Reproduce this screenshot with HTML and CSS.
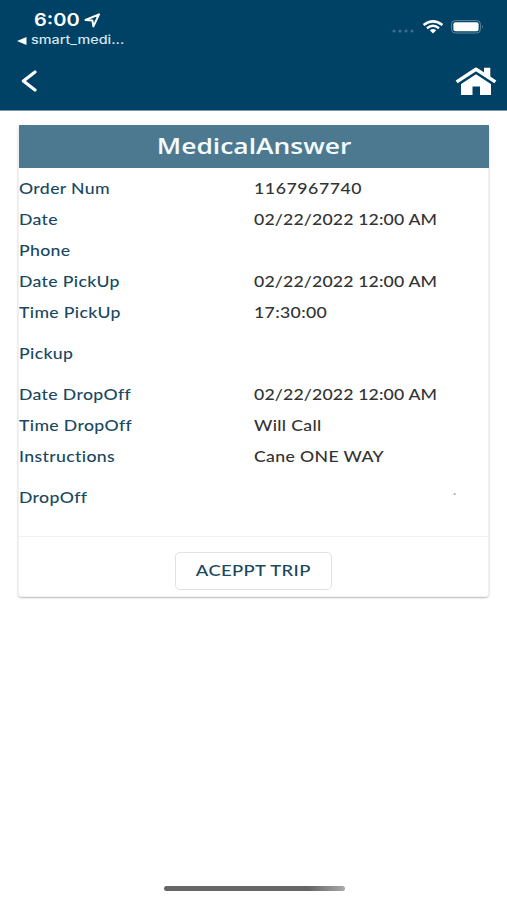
FILE: index.html
```html
<!DOCTYPE html>
<html lang="en">
<head>
<meta charset="utf-8">
<title>Trip</title>
<link rel="stylesheet" href="styles.css">
</head>
<body>
<header class="top">
  <div class="status">
    <div class="status-left">
      <div class="clock"><span>6:00</span>
        <svg width="17" height="15" viewBox="0 0 17 15"><path d="M1.5 7 15 1.4 9.4 13.4 8.4 7.4z" fill="none" stroke="#fff" stroke-width="2" stroke-linejoin="round"/></svg>
      </div>
      <div class="return"><svg width="10" height="8" viewBox="0 0 10 8"><path d="M0 4 9.5 0v8z" fill="#fff"/></svg><span>smart_medi...</span></div>
    </div>
    <div class="status-right">
      <svg class="signal" width="22" height="4" viewBox="0 0 22 4"><g fill="#3d6d8a"><circle cx="2" cy="2" r="1.6"/><circle cx="8" cy="2" r="1.6"/><circle cx="14" cy="2" r="1.6"/><circle cx="20" cy="2" r="1.6"/></g></svg>
      <svg class="wifi" width="22" height="14" viewBox="0 0 22 14"><g fill="none" stroke="#fff" stroke-width="2.5"><path d="M1.6 5.1Q11-2.4 20.4 5.1"/><path d="M5 8.2Q11 3.3 17 8.2"/></g><path d="M7.8 10.3Q11 7.9 14.2 10.3L11 13.6z" fill="#fff"/></svg>
      <svg class="battery" width="33" height="14" viewBox="0 0 33 14"><rect x=".6" y=".6" width="28.8" height="12.4" rx="3.6" fill="none" stroke="#5f86a0"/><rect x="2.4" y="2.3" width="25.2" height="9" rx="2" fill="#fff"/><path d="M31 5q1.8 1.8 0 3.6z" fill="#7898ac"/></svg>
    </div>
  </div>
  <nav class="nav">
    <svg width="16" height="22" viewBox="0 0 16 22"><path d="M14 2 2.4 11 14 20" fill="none" stroke="#fff" stroke-width="3.2" stroke-linecap="round" stroke-linejoin="round"/></svg>
    <svg width="42" height="29" viewBox="0 0 42 29"><path d="M6 16.2 21 5.6l15 10.6V28H25v-8.6h-7.5V28H6z" fill="#fff"/><path d="M1.6 16.6 21 4l19.4 12.6" fill="none" stroke="#004265" stroke-width="5.6"/><path d="M1.6 14.9 21 2.3l19.4 12.6" fill="none" stroke="#fff" stroke-width="3.4" stroke-linejoin="round"/><path d="M29 .8h6.3v10.4L29 7z" fill="#fff"/></svg>
  </nav>
</header>
<main class="card">
  <h1 class="title"><span>MedicalAnswer</span></h1>
  <dl class="details">
    <div class="row"><dt>Order Num</dt><dd class="number">1167967740</dd></div>
    <div class="row"><dt>Date</dt><dd class="stamp">02/22/2022 12:00 AM</dd></div>
    <div class="row"><dt>Phone</dt><dd></dd></div>
    <div class="row"><dt>Date PickUp</dt><dd class="stamp">02/22/2022 12:00 AM</dd></div>
    <div class="row"><dt>Time PickUp</dt><dd>17:30:00</dd></div>
    <div class="row tall"><dt>Pickup</dt><dd></dd></div>
    <div class="row"><dt>Date DropOff</dt><dd class="stamp">02/22/2022 12:00 AM</dd></div>
    <div class="row"><dt>Time DropOff</dt><dd>Will Call</dd></div>
    <div class="row"><dt>Instructions</dt><dd>Cane ONE WAY</dd></div>
    <div class="row tall"><dt>DropOff</dt><dd><i class="dot"></i></dd></div>
  </dl>
  <footer class="actions"><button class="accept"><span>ACEPPT TRIP</span></button></footer>
</main>
<div class="home-bar"></div>
</body>
</html>
```
FILE: styles.css
```css
* { box-sizing: border-box; }
body {
  margin: 0;
  height: 900px;
  display: flex;
  flex-direction: column;
  background: #fff;
  font-family: Lato, "Open Sans", sans-serif;
  overflow: hidden;
}
svg { display: block; flex: none; }
.top {
  height: 111px;
  background: #004265;
  color: #fff;
  border-bottom: 1px solid #7796b8;
}
.status { display: flex; justify-content: space-between; height: 52px; padding: 10px 23px 0 17px; }
.clock {
  display: flex;
  align-items: center;
  gap: 5px;
  height: 20px;
  padding-left: 17px;
  font: 600 17px/20px Inter, sans-serif;
}
.clock span { width: 45px; transform: scaleX(1.18); transform-origin: left; }
.return {
  display: flex;
  align-items: center;
  gap: 4px;
  height: 21px;
  font: 500 11.5px/21px Inter, sans-serif;
  color: #d5e5f0;
}
.return span { transform: scaleX(1.25); transform-origin: left; }
.status-right { display: flex; align-items: flex-start; padding-top: 10px; }
.signal { margin: 9px 8px 0 0; }
.wifi { margin-right: 7px; }
.nav { display: flex; justify-content: space-between; align-items: center; height: 58px; padding: 0 10px 0 21px; }
.card {
  width: 471px;
  height: 472px;
  margin: 14px 0 0 18px;
  border: 1px solid #f0f0f0;
  border-top: 0;
  border-radius: 4px;
  box-shadow: 0 1px 2px rgba(0, 0, 0, .28);
  display: flex;
  flex-direction: column;
}
.title {
  margin: 0 -1px 0 0;
  height: 43px;
  background: #4d7990;
  color: #f4fbff;
  font: 600 21.5px/42px "Open Sans", sans-serif;
  text-align: center;
}
.title span { display: inline-block; transform: scaleX(1.23); }
.details { margin: 0; padding: 4px 0 0; height: 368px; }
.row { display: grid; grid-template-columns: 235px 1fr; align-items: center; height: 31px; font-size: 15.5px; font-weight: 500; }
.row.tall { height: 51px; }
dt, dd { margin: 0; transform: scaleX(1.14); transform-origin: left; white-space: nowrap; letter-spacing: .3px; }
dt { color: #19485f; }
dd { color: #333; }
.stamp { letter-spacing: .13px; }
.number { letter-spacing: .5px; }
.dot { display: block; width: 2px; height: 2px; margin: -4px 0 0 175px; background: #aaa; border-radius: 1px; }
.actions { flex: 1; border-top: 1px solid #f1f1f1; display: flex; justify-content: center; padding-top: 15px; }
.accept {
  width: 157px;
  height: 38px;
  padding: 0 0 2px;
  background: #fff;
  border: 1px solid #e2e2e2;
  border-radius: 5px;
  color: #19485f;
  font: 500 15.5px Lato, sans-serif;
}
.accept span { display: inline-block; transform: scaleX(1.19); letter-spacing: .3px; }
.home-bar {
  width: 181px;
  height: 5px;
  margin: auto 0 9px 164px;
  border-radius: 3px;
  background: linear-gradient(90deg, #666 80%, #aaa);
}
```
